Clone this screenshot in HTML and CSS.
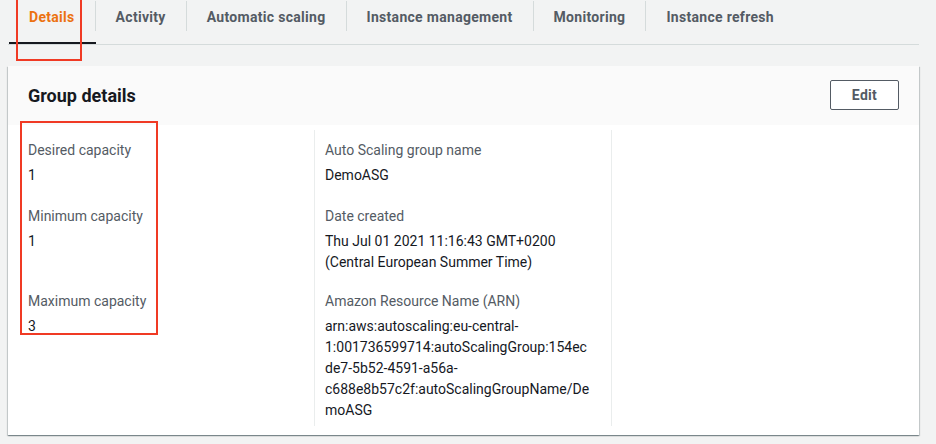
FILE: index.html
```html
<!DOCTYPE html>
<html lang="en">
<head>
<meta charset="utf-8">
<title>Group details</title>
<link rel="stylesheet" href="styles.css">
</head>
<body>
<div class="page">
  <nav class="tabs">
    <div class="tab active"><span class="tab-label">Details</span></div>
    <div class="tab"><span class="tab-label">Activity</span></div>
    <div class="tab"><span class="tab-label">Automatic scaling</span></div>
    <div class="tab"><span class="tab-label">Instance management</span></div>
    <div class="tab"><span class="tab-label">Monitoring</span></div>
    <div class="tab last"><span class="tab-label">Instance refresh</span></div>
  </nav>

  <section class="card">
    <header class="card-header">
      <h2 class="card-title">Group details</h2>
      <button class="btn">Edit</button>
    </header>
    <div class="card-body">
      <div class="col col-1">
        <div class="kv"><div class="k">Desired capacity</div><div class="v">1</div></div>
        <div class="kv"><div class="k">Minimum capacity</div><div class="v">1</div></div>
        <div class="kv"><div class="k">Maximum capacity</div><div class="v">3</div></div>
      </div>
      <div class="col col-2">
        <div class="kv"><div class="k">Auto Scaling group name</div><div class="v">DemoASG</div></div>
        <div class="kv"><div class="k">Date created</div><div class="v">Thu Jul 01 2021 11:16:43 GMT+0200<br>(Central European Summer Time)</div></div>
        <div class="kv"><div class="k">Amazon Resource Name (ARN)</div><div class="v">arn:aws:autoscaling:eu-central-<br>1:001736599714:autoScalingGroup:154ec<br>de7-5b52-4591-a56a-<br>c688e8b57c2f:autoScalingGroupName/De<br>moASG</div></div>
      </div>
      <div class="col col-3"></div>
    </div>
  </section>

  <div class="highlight hl-tab"></div>
  <div class="highlight hl-capacity"></div>
</div>
</body>
</html>
```

FILE: styles.css
```css
* { box-sizing: border-box; }

html, body {
  margin: 0;
  padding: 0;
  background: #f2f3f3;
}

body {
  font-family: Roboto, "Liberation Sans", Arial, sans-serif;
  font-size: 14px;
  color: #16191f;
}

.page {
  position: relative;
  width: 936px;
  height: 444px;
  padding: 0 17px 0 8px;
  overflow: hidden;
}

.tabs {
  display: flex;
  border-bottom: 1px solid #d5dbdb;
  height: 45px;
  padding-left: 1px;
}

.tab {
  height: 44px;
  border-bottom: 2px solid transparent;
}

.tab.active {
  border-bottom-color: #16191f;
}

.tab-label {
  display: block;
  margin-top: 1px;
  height: 30px;
  padding: 2px 20px 0 20px;
  line-height: 28px;
  font-weight: 700;
  letter-spacing: 0.3px;
  color: #545b64;
  border-right: 1px solid #d5dbdb;
  white-space: nowrap;
}

.tab.last .tab-label { border-right: none; }

.tab.active .tab-label { color: #ec7211; }

.card {
  margin-top: 21px;
  background: #ffffff;
  box-shadow: 0 1px 1px 0 rgba(0, 28, 36, 0.3), 1px 1px 1px 0 rgba(0, 28, 36, 0.15), -1px 1px 1px 0 rgba(0, 28, 36, 0.15);
}

.card-header {
  display: flex;
  align-items: center;
  justify-content: space-between;
  height: 59px;
  padding: 0 20px;
  background: #fafafa;
}

.card-title {
  margin: 0;
  font-size: 18px;
  font-weight: 700;
  color: #16191f;
  line-height: 22px;
}

.btn {
  width: 69px;
  height: 30px;
  padding: 0;
  font-family: inherit;
  font-size: 14px;
  font-weight: 700;
  letter-spacing: 0.3px;
  color: #545b64;
  background: #ffffff;
  border: 1px solid #545b64;
  border-radius: 2px;
  margin-top: -2px;
}

.card-body {
  display: grid;
  grid-template-columns: 286px 297px 1fr;
  padding: 5px 20px 9px 20px;
}

.col {
  padding-top: 10px;
  padding-bottom: 5px;
}

.col-2, .col-3 {
  border-left: 1px solid #eaeded;
  padding-left: 10px;
}

.col-2 { padding-right: 10px; }

.kv {
  margin-bottom: 18px;
}

.kv:first-child { margin-bottom: 20px; }

.kv:last-child { margin-bottom: 0; }

.col-1 .kv:nth-child(2) { height: 67px; }

.k {
  line-height: 21px;
  color: #545b64;
  margin-bottom: 4px;
}

.v {
  line-height: 21px;
  color: #16191f;
}

.highlight {
  position: absolute;
  border: 2px solid #f03a24;
  pointer-events: none;
}

.hl-tab {
  left: 16px;
  top: -2px;
  width: 66px;
  height: 63px;
}

.hl-capacity {
  left: 20px;
  top: 121px;
  width: 138px;
  height: 214px;
}
```
